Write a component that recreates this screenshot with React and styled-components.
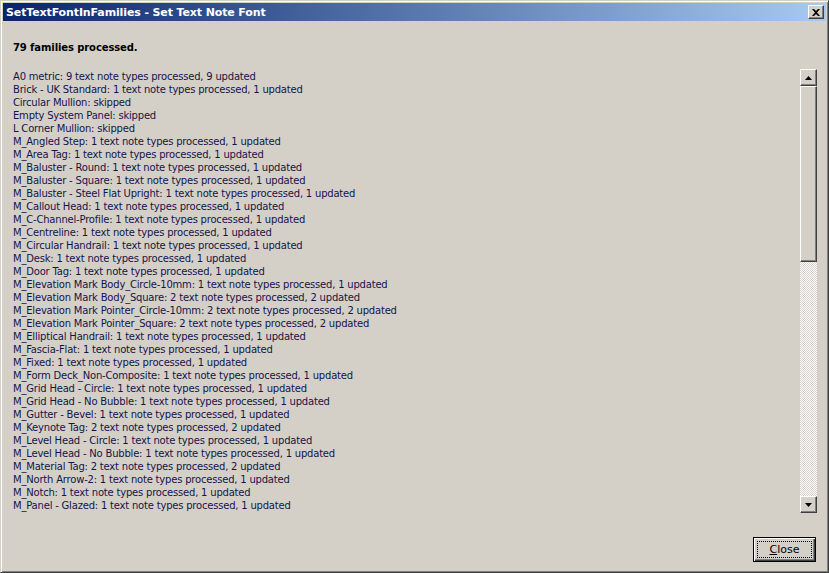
import styled, { createGlobalStyle } from "styled-components"

const GlobalStyle = createGlobalStyle`
    html, body {
        margin: 0;
        padding: 0;
        background: #d4d0c8;
    }
    * { box-sizing: border-box; }
`

const results = [
    ["A0 metric", 9, 9],
    ["Brick - UK Standard", 1, 1],
    ["Circular Mullion"],
    ["Empty System Panel"],
    ["L Corner Mullion"],
    ["M_Angled Step", 1, 1],
    ["M_Area Tag", 1, 1],
    ["M_Baluster - Round", 1, 1],
    ["M_Baluster - Square", 1, 1],
    ["M_Baluster - Steel Flat Upright", 1, 1],
    ["M_Callout Head", 1, 1],
    ["M_C-Channel-Profile", 1, 1],
    ["M_Centreline", 1, 1],
    ["M_Circular Handrail", 1, 1],
    ["M_Desk", 1, 1],
    ["M_Door Tag", 1, 1],
    ["M_Elevation Mark Body_Circle-10mm", 1, 1],
    ["M_Elevation Mark Body_Square", 2, 2],
    ["M_Elevation Mark Pointer_Circle-10mm", 2, 2],
    ["M_Elevation Mark Pointer_Square", 2, 2],
    ["M_Elliptical Handrail", 1, 1],
    ["M_Fascia-Flat", 1, 1],
    ["M_Fixed", 1, 1],
    ["M_Form Deck_Non-Composite", 1, 1],
    ["M_Grid Head - Circle", 1, 1],
    ["M_Grid Head - No Bubble", 1, 1],
    ["M_Gutter - Bevel", 1, 1],
    ["M_Keynote Tag", 2, 2],
    ["M_Level Head - Circle", 1, 1],
    ["M_Level Head - No Bubble", 1, 1],
    ["M_Material Tag", 2, 2],
    ["M_North Arrow-2", 1, 1],
    ["M_Notch", 1, 1],
    ["M_Panel - Glazed", 1, 1],
]

function lineText(r) {
    if (r.length === 1) return `${r[0]}: skipped`
    return `${r[0]}: ${r[1]} text note types processed, ${r[2]} updated`
}

export default function App() {
    return (
        <>
            <GlobalStyle />
            <Window>
                <TitleBar>
                    <TitleText>SetTextFontInFamilies - Set Text Note Font</TitleText>
                    <CaptionButton>
                        <svg width="8" height="7" viewBox="0 0 8 7">
                            <path d="M0 0h2l2 2 2-2h2L5 3.5 8 7H6L4 5 2 7H0l3-3.5z" fill="#000" />
                        </svg>
                    </CaptionButton>
                </TitleBar>
                <Content>
                    <Summary>79 families processed.</Summary>
                    <ListArea>
                        <Lines>
                            {results.map((r, i) => <Line key={i}>{lineText(r)}</Line>)}
                        </Lines>
                        <ScrollBar>
                            <ArrowButton>
                                <svg width="7" height="4" viewBox="0 0 7 4"><path d="M3.5 0L7 4H0z" fill="#000" /></svg>
                            </ArrowButton>
                            <Thumb />
                            <Track />
                            <ArrowButton>
                                <svg width="7" height="4" viewBox="0 0 7 4"><path d="M0 0h7L3.5 4z" fill="#000" /></svg>
                            </ArrowButton>
                        </ScrollBar>
                    </ListArea>
                    <Footer>
                        <CloseButton>
                            <FocusRing><u>C</u>lose</FocusRing>
                        </CloseButton>
                    </Footer>
                </Content>
            </Window>
        </>
    )
}

const raised = `
    border-style: solid;
    border-width: 1px;
    border-color: #ffffff #404040 #404040 #ffffff;
    box-shadow: inset -1px -1px 0 #808080, inset 1px 1px 0 #d4d0c8;
    background: #d4d0c8;
`

const Window = styled.div`
    width: 829px;
    height: 573px;
    display: flex;
    flex-direction: column;
    background: #d4d0c8;
    border-style: solid;
    border-width: 1px;
    border-color: #d4d0c8 #404040 #404040 #d4d0c8;
    box-shadow: inset 1px 1px 0 #ffffff, inset -1px -1px 0 #808080;
    padding: 2px;
`
const TitleBar = styled.div`
    height: 18px;
    display: flex;
    align-items: center;
    justify-content: space-between;
    padding: 0 2px 0 3px;
    background: linear-gradient(to right, #0a246a, #a6caf0);
`
const TitleText = styled.span`
    font-family: Tahoma, "DejaVu Sans", sans-serif;
    font-size: 11px;
    font-weight: 700;
    color: #ffffff;
    letter-spacing: -0.12px;
    white-space: nowrap;
`
const CaptionButton = styled.div`
    ${raised}
    width: 16px;
    height: 14px;
    display: flex;
    align-items: center;
    justify-content: center;
`
const Content = styled.div`
    flex: 1;
    display: flex;
    flex-direction: column;
    padding: 0 9px 0 10px;
    font-family: Tahoma, "DejaVu Sans", sans-serif;
    font-size: 10px;
`
const Summary = styled.div`
    margin-top: 20px;
    height: 13px;
    line-height: 13px;
    font-weight: 700;
    color: #000000;
    letter-spacing: -0.1px;
`
const ListArea = styled.div`
    margin-top: 15px;
    height: 444px;
    display: flex;
    gap: 8px;
`
const Lines = styled.div`
    flex: 1;
    overflow: hidden;
    padding-top: 1px;
    color: #141448;
`
const Line = styled.div`
    height: 13px;
    line-height: 13px;
    white-space: nowrap;
    letter-spacing: -0.2px;
`
const ScrollBar = styled.div`
    width: 17px;
    display: flex;
    flex-direction: column;
`
const ArrowButton = styled.div`
    ${raised}
    width: 17px;
    height: 17px;
    display: flex;
    align-items: center;
    justify-content: center;
`
const Thumb = styled.div`
    ${raised}
    width: 17px;
    height: 176px;
`
const Track = styled.div`
    flex: 1;
    background-image: conic-gradient(#ffffff 25%, #d4d0c8 0 50%, #ffffff 0 75%, #d4d0c8 0);
    background-size: 2px 2px;
`
const Footer = styled.div`
    display: flex;
    justify-content: flex-end;
    margin-top: 24px;
    padding-right: 1px;
`
const CloseButton = styled.div`
    width: 63px;
    height: 25px;
    border: 1px solid #000000;
    padding: 1px;
    display: flex;
    background: #d4d0c8;
    box-shadow: inset 1px 1px 0 #ffffff, inset -1px -1px 0 #404040, inset -2px -2px 0 #808080;
`
const FocusRing = styled.div`
    flex: 1;
    margin: 2px;
    border: 1px dotted #000000;
    display: flex;
    align-items: center;
    justify-content: center;
    font-family: Tahoma, "DejaVu Sans", sans-serif;
    font-size: 11px;
    color: #000000;
    u { text-decoration: underline; }
`
